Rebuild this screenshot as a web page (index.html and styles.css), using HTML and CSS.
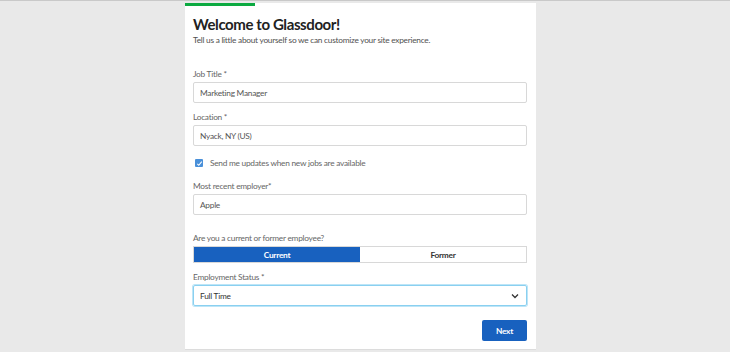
FILE: index.html
```html
<!DOCTYPE html>
<html lang="en">
<head>
  <meta charset="UTF-8">
  <title>Welcome to Glassdoor</title>
  <link rel="stylesheet" href="styles.css">
</head>
<body>
  <div class="card">
    <div class="progress"></div>
    <div class="content">
      <h1 class="title">Welcome to Glassdoor!</h1>
      <p class="subtitle">Tell us a little about yourself so we can customize your site experience.</p>

      <label class="label first">Job Title *</label>
      <div class="input">Marketing Manager</div>

      <label class="label">Location *</label>
      <div class="input">Nyack, NY (US)</div>

      <div class="check-row">
        <span class="checkbox">
          <svg width="7" height="7" viewBox="0 0 8 8"><path d="M1.5 4.3 L3.2 6 L6.6 1.8" fill="none" stroke="#fff" stroke-width="1.2"/></svg>
        </span>
        <span class="check-text">Send me updates when new jobs are available</span>
      </div>

      <label class="label employer">Most recent employer*</label>
      <div class="input">Apple</div>

      <label class="label question">Are you a current or former employee?</label>
      <div class="toggle">
        <button class="toggle-btn active">Current</button>
        <button class="toggle-btn">Former</button>
      </div>

      <label class="label">Employment Status *</label>
      <div class="input select">
        <span>Full Time</span>
        <svg width="8" height="6" viewBox="0 0 8 6"><path d="M1 1.5 L4 4.5 L7 1.5" fill="none" stroke="#333" stroke-width="1.3"/></svg>
      </div>

      <div class="actions">
        <button class="next">Next</button>
      </div>
    </div>
  </div>
</body>
</html>
```

FILE: styles.css
```css
body {
  margin: 0;
  padding: 0;
  font-family: Lato, "Open Sans", sans-serif;
  background: #e9e9e9;
  border-top: 1px solid #c9c9c9;
  min-height: 351px;
  overflow: hidden;
}

.card {
  width: 351px;
  margin: 2px 0 0 185px;
  background: #fff;
  border-bottom: 1px solid #dcdcdc;
}

.progress {
  width: 70px;
  height: 3px;
  background: #0caa41;
}

.content {
  padding: 9px 9px 8px 8px;
  display: flex;
  flex-direction: column;
  font-size: 8.3px;
  letter-spacing: -0.25px;
}

.title {
  margin: 0;
  font-size: 15px;
  line-height: 18px;
  letter-spacing: -0.4px;
  font-weight: 700;
  color: #222;
}

.subtitle {
  margin: 1px 0 0;
  line-height: 12px;
  color: #505050;
}

.label {
  display: block;
  margin: 8px 0 2px;
  line-height: 12px;
  color: #666;
}

.label.first {
  margin-top: 22px;
}

.label.employer {
  margin-top: 11px;
}

.label.question {
  margin-top: 17px;
}

.input {
  height: 21px;
  box-sizing: border-box;
  border: 1px solid #d8d8d8;
  border-radius: 2px;
  padding: 0 6px;
  display: flex;
  align-items: center;
  color: #555;
}

.select {
  justify-content: space-between;
  border: 1px solid #8ad0f0;
  box-shadow: 0 0 0 1px #bde5f7;
  color: #333;
  padding-right: 7px;
}

.check-row {
  margin-top: 11px;
  height: 12px;
  display: flex;
  align-items: center;
  gap: 7px;
  padding-left: 2px;
}

.checkbox {
  width: 8px;
  height: 8px;
  border-radius: 1px;
  background: #4a90d9;
  display: flex;
  align-items: center;
  justify-content: center;
}

.check-text {
  color: #666;
}

.toggle {
  display: flex;
  height: 17px;
  border: 1px solid #d8d8d8;
  box-sizing: border-box;
}

.toggle-btn {
  flex: 1;
  border: none;
  margin: 0;
  padding: 0;
  background: #fff;
  font-family: inherit;
  font-size: inherit;
  letter-spacing: inherit;
  font-weight: 700;
  color: #333;
}

.toggle-btn.active {
  background: #1861bf;
  color: #fff;
}

.actions {
  display: flex;
  justify-content: flex-end;
  margin-top: 14px;
}

.next {
  width: 45px;
  height: 21px;
  border: none;
  border-radius: 2px;
  background: #1861bf;
  color: #fff;
  font-family: inherit;
  font-size: inherit;
  letter-spacing: inherit;
  font-weight: 700;
}
```
